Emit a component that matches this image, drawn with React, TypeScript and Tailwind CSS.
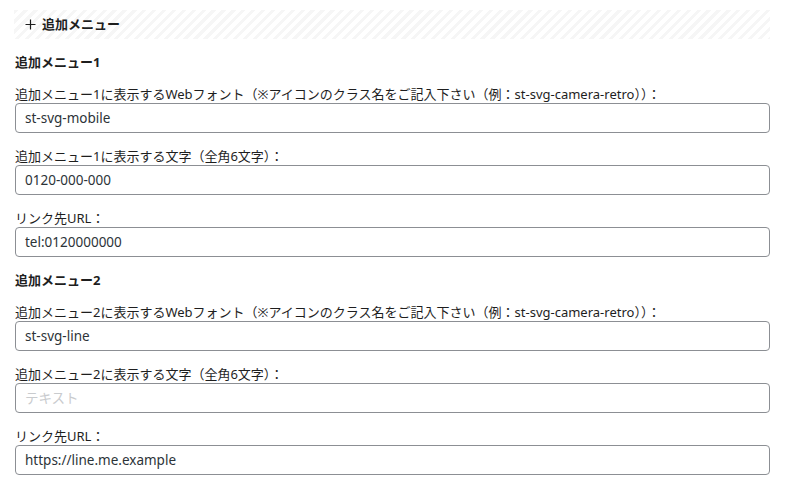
const font = { fontFamily: '"Noto Sans", "Noto Sans CJK JP", sans-serif' };

type Field = { label: string; value?: string; placeholder?: string };

const menus: { title: string; fields: Field[] }[] = [
  {
    title: "追加メニュー1",
    fields: [
      {
        label: "追加メニュー1に表示するWebフォント（※アイコンのクラス名をご記入下さい（例：st-svg-camera-retro））：",
        value: "st-svg-mobile",
      },
      { label: "追加メニュー1に表示する文字（全角6文字）：", value: "0120-000-000" },
      { label: "リンク先URL：", value: "tel:0120000000" },
    ],
  },
  {
    title: "追加メニュー2",
    fields: [
      {
        label: "追加メニュー2に表示するWebフォント（※アイコンのクラス名をご記入下さい（例：st-svg-camera-retro））：",
        value: "st-svg-line",
      },
      { label: "追加メニュー2に表示する文字（全角6文字）：", placeholder: "テキスト" },
      { label: "リンク先URL：", value: "https://line.me.example" },
    ],
  },
];

function TextField({ field }: { field: Field }) {
  return (
    <label className="flex flex-col">
      <span className="h-[18px] text-[13px] leading-[18px] text-[#1e1e1e]">{field.label}</span>
      <input
        type="text"
        defaultValue={field.value}
        placeholder={field.placeholder}
        className="h-[30px] w-full rounded-[4px] border border-[#8c8f94] bg-white px-[9px] text-[13.5px] text-[#2c3338] outline-none placeholder:text-[#c9cbce]"
        style={font}
      />
    </label>
  );
}

export default function App() {
  return (
    <div className="min-h-screen bg-white px-[15px] pt-[10px]" style={font}>
      <div className="flex flex-col gap-[14px]">
        {/* Section header */}
        <div className="-ml-[1px] flex h-[29px] items-center gap-[6px] bg-[repeating-linear-gradient(135deg,#f6f6f6_0px,#f6f6f6_3px,#ffffff_3px,#ffffff_7px)] pl-[11px]">
          <svg width="11" height="11" viewBox="0 0 11 11" aria-hidden="true">
            <path d="M5.5 0.5v10M0.5 5.5h10" stroke="#1e1e1e" strokeWidth="1.2" />
          </svg>
          <span className="text-[13px] font-bold text-[#1e1e1e]">追加メニュー</span>
        </div>

        {menus.map((menu) => (
          <div key={menu.title} className="flex flex-col gap-[14px]">
            <h3 className="h-[18px] text-[13px] font-bold leading-[18px] text-[#1e1e1e]">{menu.title}</h3>
            {menu.fields.map((f, i) => (
              <TextField key={i} field={f} />
            ))}
          </div>
        ))}
      </div>
    </div>
  );
}
